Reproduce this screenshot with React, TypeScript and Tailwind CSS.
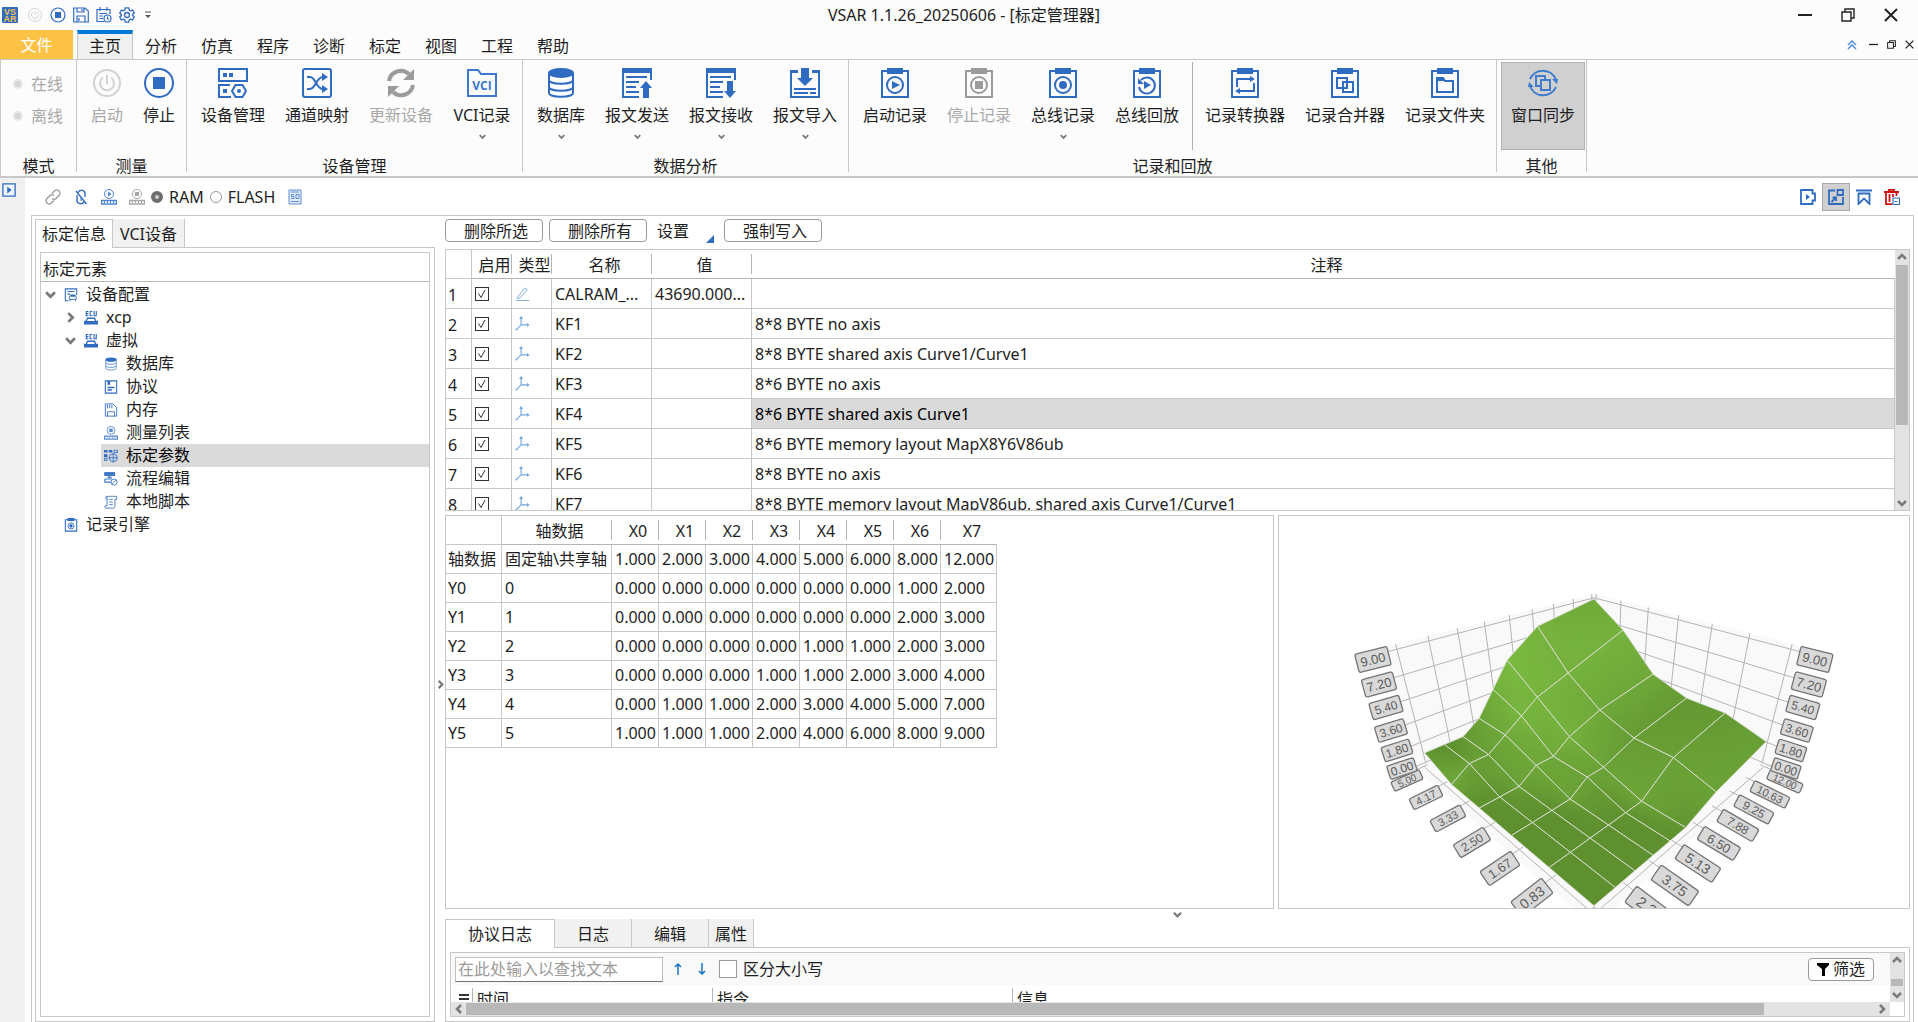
import React, { useState } from "react";
import clsx from "clsx";

const BLUE = "#2f6bc0";
const GRAY = "#9b9b9b";

/* ---------- ribbon icons (30 x 30) ---------- */

const Clipboard = ({
  color = BLUE,
  children,
}: {
  color?: string;
  children: React.ReactNode;
}) => (
  <g stroke={color} fill="none" strokeWidth="2">
    <path d="M2 3H28V29H2z" />
    <path d="M7 0H23V6H7z" fill={color} stroke="none" />
    {children}
  </g>
);

const ribbonIcons: Record<string, JSX.Element> = {
  power: (
    <g fill="none" stroke="#d2d2d2" strokeWidth="2">
      <circle cx="15" cy="15" r="13" />
      <path d="M11 9.5a7 7 0 1 0 8 0M15 7v9" />
    </g>
  ),
  stop: (
    <g>
      <circle cx="15" cy="15" r="14" fill="none" stroke={BLUE} strokeWidth="2" />
      <path d="M9 9H21V21H9z" fill={BLUE} />
    </g>
  ),
  device: (
    <g fill="none" stroke={BLUE} strokeWidth="2">
      <path d="M1 1H29V13H1zM12 17H1V29H13" />
      <path d="M17.500 17h7l3.500 6-3.500 6h-7L14 23z" />
      <path d="M5 5h4v4H5zM11 5h4v4h-4zM5 21h4v4H5z" fill={BLUE} stroke="none" />
      <circle cx="21" cy="23" r="2" fill={BLUE} stroke="none" />
    </g>
  ),
  shuffle: (
    <g fill="none" stroke={BLUE} strokeWidth="2">
      <rect x="1" y="1" width="28" height="28" rx="2" />
      <path d="M5 9h3c6 0 6 12 13 12h2M5 21h3c6 0 6-12 13-12h2" />
      <path d="M20 5l6 4-6 4zM20 17l6 4-6 4z" fill={BLUE} stroke="none" />
    </g>
  ),
  refresh: (
    <g fill="none" stroke={GRAY} strokeWidth="4">
      <path d="M3 13A12 12 0 0 1 23 6M27 17A12 12 0 0 1 7 24" />
      <path d="M28 1v11H17zM2 29V18h11z" fill={GRAY} stroke="none" />
    </g>
  ),
  vci: (
    <g>
      <path
        d="M1 28V2H11L14 6H29V28z"
        fill="none"
        stroke="#3c78cc"
        strokeWidth="2"
      />
      <text
        x="15"
        y="22"
        textAnchor="middle"
        fontSize="12"
        fontWeight="700"
        fontFamily="Open Sans, sans-serif"
        fill="#3c78cc"
      >
        VCI
      </text>
    </g>
  ),
  database: (
    <g>
      <ellipse cx="15" cy="5" rx="13" ry="5" fill={BLUE} />
      <path
        d="M3 5V25c0 5 24 5 24 0V5M3 12c0 5 24 5 24 0M3 19c0 5 24 5 24 0"
        fill="none"
        stroke={BLUE}
        strokeWidth="2"
      />
    </g>
  ),
  send: (
    <g fill="none" stroke={BLUE} strokeWidth="2">
      <path d="M29 12V2M1 1V29H17M4 9H25M4 14H17M4 19H14M4 24H17" />
      <path d="M0 0H30V5H0zM24 13l6 7h-3v10h-6V20h-3z" fill={BLUE} stroke="none" />
    </g>
  ),
  receive: (
    <g fill="none" stroke={BLUE} strokeWidth="2">
      <path d="M29 12V2M1 1V29H17M4 9H25M4 14H17M4 19H14M4 24H17" />
      <path d="M0 0H30V5H0zM21 13h6v10h3l-6 7-6-7h3z" fill={BLUE} stroke="none" />
    </g>
  ),
  import: (
    <g fill="none" stroke={BLUE} strokeWidth="2">
      <path d="M8 4H1V29H29V4H22M4 21H26M4 25H18M20 25H26" />
      <path d="M0 2h8v3H0zM22 2h8v3h-8zM11 0h8v10h4l-8 8-8-8h4z" fill={BLUE} stroke="none" />
    </g>
  ),
  recStart: (
    <Clipboard>
      <circle cx="15" cy="17" r="8" />
      <path d="M12 13l8 4-8 4z" fill={BLUE} stroke="none" />
    </Clipboard>
  ),
  recStop: (
    <Clipboard color={GRAY}>
      <circle cx="15" cy="17" r="8" />
      <path d="M11 13h8v8h-8z" fill={GRAY} stroke="none" />
    </Clipboard>
  ),
  recBus: (
    <Clipboard>
      <circle cx="15" cy="17" r="8" />
      <circle cx="15" cy="17" r="4" fill={BLUE} stroke="none" />
    </Clipboard>
  ),
  replay: (
    <Clipboard>
      <path d="M9 12A8 8 0 1 1 7 19" />
      <path d="M6 10v6h6zM12 13l7 4-7 4z" fill={BLUE} stroke="none" />
    </Clipboard>
  ),
  convert: (
    <Clipboard>
      <path d="M7 19V11H21M24 15V23H9" />
      <path d="M20 8l5 3-5 3zM10 20l-5 3 5 3z" fill={BLUE} stroke="none" />
    </Clipboard>
  ),
  merge: (
    <Clipboard>
      <path d="M7 10H17V20H7zM13 14H23V24H13z" />
    </Clipboard>
  ),
  recFolder: (
    <Clipboard>
      <path d="M7 24V10h6l2 3h8V24z" />
      <path d="M6 9h7l2 4H6z" fill={BLUE} stroke="none" />
    </Clipboard>
  ),
  sync: (
    <g fill="none" stroke="#3f7ccd" strokeWidth="2">
      <path d="M2 11A14 14 0 0 1 28 12M28 19A14 14 0 0 1 2 18" />
      <path d="M8 8H17V18H8z" />
      <path d="M13 12H22V22H13z" fill="#d0d0d0" />
      <path d="M24 11h6l-1 5zM6 19H0l1-5z" fill="#3f7ccd" stroke="none" />
    </g>
  ),
};

const RibbonIcon = ({ name }: { name: string }) => (
  <svg width="30" height="30" viewBox="0 0 30 30">
    {ribbonIcons[name]}
  </svg>
);

/* ---------- small icons (16 x 16) ---------- */

const Ruler = ({ color, square }: { color: string; square?: boolean }) => (
  <g fill="none" stroke={color}>
    <circle cx="8" cy="5" r="4.500" />
    <path
      d={square ? "M6 3h4v4H6z" : "M7 2.500L10.500 5 7 7.500z"}
      fill={color}
      stroke="none"
    />
    <path d="M.5 11.500H15.500V15H.5z" strokeWidth="1.500" />
    <path d="M3.500 12v2M6.500 12v2M9.500 12v2M12.500 12v2" />
  </g>
);

const smallIcons: Record<string, JSX.Element> = {
  config: (
    <g fill="none" stroke={BLUE}>
      <path d="M5 14.500H1.500V1H14.500V8M4 4H12M4 7H7" strokeWidth="1.200" />
      <path d="M6 13V10.500l1.500-2.500h5l1.500 2.500V13zM7 13v2M13 13v2" />
      <path d="M7 10h6v-2H8z" fill={BLUE} stroke="none" />
    </g>
  ),
  ecu: (
    <g fill={BLUE}>
      <path
        d="M5 .6H2.600V5.400H5M2.600 3H5M9.500 .6H7V5.400H9.500M11.500 0V5.400H14V0"
        fill="none"
        stroke={BLUE}
        strokeWidth="1.300"
      />
      <path d="M3.500 7.500h9l1.500 3.500H16v4.500H0V11h2z" />
      <path d="M4.500 9h7l1 2.500h-9z" fill="#fff" />
    </g>
  ),
  db: (
    <g>
      <ellipse cx="8" cy="3" rx="6.500" ry="2.500" fill={BLUE} />
      <path
        d="M2 3V13c0 2.500 12 2.500 12 0V3M2 6.500c0 2.500 12 2.500 12 0M2 10c0 2.500 12 2.500 12 0"
        fill="none"
        stroke="#5a8ad0"
      />
    </g>
  ),
  protocol: (
    <g fill="none" stroke={BLUE}>
      <path d="M1.500 1H14.500V15H1.500z" strokeWidth="1.200" />
      <path d="M4 1v5l1.500-1L7 6V1z" fill={BLUE} stroke="none" />
      <path d="M4 8.500h8M4 11.500h5" strokeWidth="1.600" />
    </g>
  ),
  memory: (
    <g fill="none" stroke={BLUE}>
      <path d="M1.500 1H10L14.500 5V15H1.500zM4 15V10H12V15M4 2V6M6.500 2V6M9 2V6" />
    </g>
  ),
  measure: <Ruler color="#5a8ad0" square />,
  params: (
    <g fill={BLUE}>
      <path d="M0 1h4v3H0zM5.500 1h4v3h-4zM0 6h4v3H0z" />
      <path d="M11.500 1.500h4v2.500h-4zM.5 10.500h3v2.500h-3z" fill="none" stroke={BLUE} />
      <circle cx="10.500" cy="10" r="4.500" fill="none" stroke={BLUE} />
      <path d="M10.500 4.500v11M5 10h11" stroke={BLUE} fill="none" />
    </g>
  ),
  flow: (
    <g fill="none" stroke="#3f76c6">
      <path d="M1 1H12V4H1zM6 4V7M1 8H9M9 6H4M1 8V11.500H8" strokeWidth="1.300" />
      <path d="M1 1H12V3H1z" fill={BLUE} />
      <circle cx="11.500" cy="11.500" r="3.500" />
      <path d="M9 14l5-5" />
    </g>
  ),
  script: (
    <g fill="none" stroke="#3f76c6">
      <path d="M3.500 1.500H14.500V5H12.500V13c0 2-2 2-2 2H2c-1.500 0-1.500-3 0-3H3.500zM3.500 1.500C1.500 1.500 1.500 5 3.500 5M6 5h4M6 8h4M6 11h4" />
    </g>
  ),
  engine: (
    <g fill="none" stroke={BLUE}>
      <path d="M1.500 2H14.500V15H1.500z" strokeWidth="1.200" />
      <path d="M4 0h8v3.500H4z" fill={BLUE} stroke="none" />
      <circle cx="8" cy="9" r="3.500" />
      <circle cx="8" cy="9" r="1.500" fill={BLUE} />
    </g>
  ),
  powerSmall: (
    <g fill="none" stroke="#d6d6d6">
      <circle cx="8" cy="8" r="6.500" />
      <path d="M6 5a3.500 3.500 0 1 0 4 0M8 4v4" />
    </g>
  ),
  stopSmall: (
    <g>
      <circle cx="8" cy="8" r="7" fill="none" stroke={BLUE} strokeWidth="1.200" />
      <path d="M5 5h6v6H5z" fill={BLUE} />
    </g>
  ),
  save: (
    <path
      d="M.7 1H12L15.300 4V15H.7zM4 15V9H12V15M4 1V5H11V1M6 11v3M9 2v2"
      fill="none"
      stroke={BLUE}
      strokeWidth="1.200"
    />
  ),
  schedule: (
    <g fill="none" stroke={BLUE} strokeWidth="1.200">
      <path d="M8 14.500H1V2.500H14V7M4 0V4M11 0V4M3.500 6.500H11M3.500 9H7M3.500 11.500H7" />
      <circle cx="11.500" cy="11.500" r="3.500" />
      <path d="M11.500 9.500v2.500h1.500" />
    </g>
  ),
  gear: (
    <g fill="none" stroke={BLUE} strokeWidth="1.300">
      <path d="M6.300.8h3.400l.5 2.200 1.300.8 2.100-.7 1.700 2.900-1.600 1.400v1.200l1.600 1.400-1.700 2.900-2.100-.7-1.300.8-.5 2.200H6.300l-.5-2.200-1.300-.8-2.100.7L.7 10l1.600-1.400V7.400L.7 6l1.700-2.900 2.100.7L5.800 3z" />
      <circle cx="8" cy="8" r="2.500" />
    </g>
  ),
  link: (
    <g fill="none" stroke={GRAY} strokeWidth="1.400">
      <path d="M7 4.500l2.500-2.500a3 3 0 0 1 4.500 4.500L11 9.500a3 3 0 0 1-4 0" />
      <path d="M9 11.500l-2.500 2.500A3 3 0 0 1 2 9.500L5 6.500a3 3 0 0 1 4 0" />
    </g>
  ),
  unlink: (
    <g fill="none" stroke={BLUE} strokeWidth="1.400">
      <path d="M5 3.500C7 0 12 1 12 4.500V8M11 13c-2 3-7 2-7-1.500V6M3 2l10.500 13" />
      <path d="M8 9v3" strokeWidth="1" />
    </g>
  ),
  rulerPlay: <Ruler color="#4f84d2" />,
  rulerStop: <Ruler color="#a6a6a6" square />,
  sq: (
    <g fill="none" stroke="#5c8cd2">
      <path d="M2 1H14V15H2z" fill="#e3ecf8" />
      <path d="M4 3h8" />
      <path d="M7 5.500H4.500v2H7v2H4M9 5.500h3v4H9zM4 12.500h8" />
    </g>
  ),
  edit: (
    <g fill="none" stroke="#7fabd9">
      <path d="M3 11.500L10.500 2l2.500 2L5.500 12.500l-3 1zM1 15.500h14" />
    </g>
  ),
  map: (
    <g fill="none" stroke="#74a9dd" strokeWidth="1.200">
      <path d="M6.500 1.500V9.500H14M6.500 9.500L1.500 14.500M5 3l1.500-2L8 3M13 8l1.500 1.500L13 11" />
      <circle cx="1.500" cy="14.500" r="1" fill="#74a9dd" stroke="none" />
    </g>
  ),
  play: (
    <g>
      <path d="M1 1H15V15H1z" fill="#eef4fb" stroke={BLUE} strokeWidth="1.500" />
      <path d="M6 4l5 4-5 4z" fill={BLUE} />
    </g>
  ),
  panelPlay: (
    <g fill="none" stroke={BLUE} strokeWidth="1.800">
      <path d="M1 1H12.500V4.500H15V11.500H12.500V15H1z" />
      <path d="M6 5l4 3-4 3z" fill={BLUE} stroke="none" />
    </g>
  ),
  popout: (
    <g fill="none" stroke={BLUE} strokeWidth="1.800">
      <path d="M7 1.500H1V15H15V8M9.500 1H15V6H9.500zM3.500 13L8 8.500M4.500 8.500H8V12" />
    </g>
  ),
  bookmark: (
    <path
      d="M0 1.500H16M2.500 4.500H13.500V15L8 9.500 2.500 15z"
      fill="none"
      stroke={BLUE}
      strokeWidth="1.800"
    />
  ),
  trash: (
    <g fill="none" stroke="#cf1111" strokeWidth="1.800">
      <path d="M0 3H15M5 2V.8h5V2M2 3V15.200H8M12.500 3V7M5.500 5V13M9 5V8" />
      <path d="M9 9H15.500V15.500H9zM10.500 12.500h3" stroke={BLUE} fill="#fff" strokeWidth="1.200" />
    </g>
  ),
};

const SmallIcon = ({ name, size = 16 }: { name: string; size?: number }) => (
  <svg width={size} height={size} viewBox="0 0 16 16" className="shrink-0">
    {smallIcons[name]}
  </svg>
);

const arrowPaths = {
  down: "M1 3l4 4 4-4",
  up: "M1 7l4-4 4 4",
  left: "M7 1L3 5l4 4",
  right: "M3 1l4 4-4 4",
};

const Chevron = ({
  dir = "down",
  size = 10,
}: {
  dir?: keyof typeof arrowPaths;
  size?: number;
}) => (
  <svg width={size} height={size} viewBox="0 0 10 10" className="shrink-0">
    <path d={arrowPaths[dir]} fill="none" stroke="#7a7a7a" strokeWidth="2.500" />
  </svg>
);

/* ---------- title bar and menu ---------- */

const WindowButtons = ({ small }: { small?: boolean }) => {
  const s = small ? 9 : 14;
  return (
    <div className={clsx("flex items-center", small ? "gap-[9px]" : "gap-[29px]")}>
      <button aria-label="最小化">
        <svg width={s} height={s} viewBox="0 0 14 14">
          <path d="M0 7H14" stroke="#222" strokeWidth="2" />
        </svg>
      </button>
      <button aria-label="还原">
        <svg width={s} height={s} viewBox="0 0 14 14">
          <path
            d="M1 4H10V13H1zM4 4V1H13V10H10"
            fill="none"
            stroke="#222"
            strokeWidth={small ? 1.6 : 1.4}
          />
        </svg>
      </button>
      <button aria-label="关闭">
        <svg width={s} height={s} viewBox="0 0 14 14">
          <path d="M1 1L13 13M13 1L1 13" stroke="#222" strokeWidth="2" />
        </svg>
      </button>
    </div>
  );
};

const TitleBar = () => (
  <header className="relative flex h-[30px] items-center justify-between pl-0.5 pr-5">
    <div className="flex items-center gap-[7px]">
      <svg width="16" height="16" viewBox="0 0 16 16" className="mr-0.5">
        <rect width="16" height="16" rx="1" fill={BLUE} />
        <g
          fill="#f3c052"
          fontSize="9"
          fontWeight="700"
          fontFamily="Liberation Sans, sans-serif"
          textAnchor="middle"
        >
          <text x="8" y="8">VS</text>
          <text x="8" y="15">AR</text>
        </g>
      </svg>
      <SmallIcon name="powerSmall" />
      <SmallIcon name="stopSmall" />
      <SmallIcon name="save" />
      <SmallIcon name="schedule" />
      <SmallIcon name="gear" />
      <svg width="8" height="8" viewBox="0 0 8 8" className="ml-0.5">
        <path d="M1 1H7" stroke="#555" />
        <path d="M1 4H7L4 7z" fill="#555" />
      </svg>
    </div>
    <h1 className="absolute inset-x-0 text-center pointer-events-none">
      <span className="ml-2.5">VSAR 1.1.26_20250606 - [标定管理器]</span>
    </h1>
    <WindowButtons />
  </header>
);

const menus = ["主页", "分析", "仿真", "程序", "诊断", "标定", "视图", "工程", "帮助"];

const MenuBar = () => {
  const [active, setActive] = useState("主页");
  return (
    <nav className="flex h-[30px] items-stretch border-b border-[#c8c8c8]">
      <button className="mr-1 w-[73px] bg-[#fbc245] text-white">文件</button>
      {menus.map((menu) => (
        <button
          key={menu}
          onClick={() => setActive(menu)}
          className={clsx(
            "w-14 border-t-4 pb-1.5",
            menu === active
              ? "border-t-[#0078d7] border-x border-x-[#c8c8c8] bg-[#f0f0f0]"
              : "border-t-transparent"
          )}
        >
          {menu}
        </button>
      ))}
      <div className="ml-auto flex items-center gap-3 pr-1">
        <svg width="10" height="10" viewBox="0 0 10 10">
          <path d="M1 5l4-4 4 4M1 9l4-4 4 4" fill="none" stroke="#5b8fd6" strokeWidth="1.600" />
        </svg>
        <WindowButtons small />
      </div>
    </nav>
  );
};

/* ---------- ribbon ---------- */

type RibbonItem = {
  icon: string;
  label: string;
  width: string;
  drop?: boolean;
  disabled?: boolean;
  active?: boolean;
  line?: boolean;
};

const groups: { title: string; items: RibbonItem[] }[] = [
  {
    title: "测量",
    items: [
      { icon: "power", label: "启动", width: "w-[52px]", disabled: true },
      { icon: "stop", label: "停止", width: "w-[52px]" },
    ],
  },
  {
    title: "设备管理",
    items: [
      { icon: "device", label: "设备管理", width: "w-[84px]" },
      { icon: "shuffle", label: "通道映射", width: "w-[84px]" },
      { icon: "refresh", label: "更新设备", width: "w-[84px]", disabled: true },
      { icon: "vci", label: "VCI记录", width: "w-[78px]", drop: true },
    ],
  },
  {
    title: "数据分析",
    items: [
      { icon: "database", label: "数据库", width: "w-[68px]", drop: true },
      { icon: "send", label: "报文发送", width: "w-[84px]", drop: true },
      { icon: "receive", label: "报文接收", width: "w-[84px]", drop: true },
      { icon: "import", label: "报文导入", width: "w-[84px]", drop: true },
    ],
  },
  {
    title: "记录和回放",
    items: [
      { icon: "recStart", label: "启动记录", width: "w-[84px]" },
      { icon: "recStop", label: "停止记录", width: "w-[84px]", disabled: true },
      { icon: "recBus", label: "总线记录", width: "w-[84px]", drop: true },
      { icon: "replay", label: "总线回放", width: "w-[84px]" },
      { icon: "convert", label: "记录转换器", width: "w-[100px]", line: true },
      { icon: "merge", label: "记录合并器", width: "w-[100px]" },
      { icon: "recFolder", label: "记录文件夹", width: "w-[100px]" },
    ],
  },
  {
    title: "其他",
    items: [{ icon: "sync", label: "窗口同步", width: "w-[84px]", active: true }],
  },
];

const RibbonButton = ({ item }: { item: RibbonItem }) => (
  <>
    {item.line && <div className="mr-0.5 ml-[3px] w-px bg-[#b0b0b0]" />}
    <button
      disabled={item.disabled}
      className={clsx(
        "flex h-[88px] flex-col items-center border pt-[5px] leading-6 whitespace-nowrap",
        item.width,
        item.active ? "border-[#b0b0b0] bg-[#d0d0d0]" : "border-transparent",
        item.disabled && "text-[#a9a9a9]"
      )}
    >
      <RibbonIcon name={item.icon} />
      <span className="mt-[5px]">{item.label}</span>
      {item.drop && (
        <span className="mt-1.5">
          <Chevron size={7} />
        </span>
      )}
    </button>
  </>
);

const Ribbon = () => (
  <div className="flex h-[118px] border-b-2 border-l border-[#c8c8c8]">
    <fieldset
      disabled
      className="mb-1 flex w-[76px] flex-col border-r border-[#c8c8c8] pt-1 text-[#a9a9a9]"
    >
      {["在线", "离线"].map((mode) => (
        <label key={mode} className="mt-2 flex h-6 items-center gap-2 pl-3 leading-6">
          <input
            type="radio"
            name="mode"
            className="size-2.5 appearance-none rounded-full border-2 border-[#e8e8e8] bg-[#d5d5d5]"
          />
          {mode}
        </label>
      ))}
      <div className="mt-auto text-center leading-3 text-[#1e1e1e]">模式</div>
    </fieldset>
    {groups.map((group) => (
      <section key={group.title} className="mb-1 flex flex-col border-r border-[#c8c8c8] pt-0.5">
        <div className="flex px-1 pr-px">
          {group.items.map((item) => (
            <RibbonButton key={item.label} item={item} />
          ))}
        </div>
        <div className="mt-auto text-center leading-3">{group.title}</div>
      </section>
    ))}
  </div>
);

/* ---------- calibration toolbar ---------- */

const radioStyle =
  "size-3 appearance-none rounded-full border border-[#9a9a9a] bg-white checked:border-4 checked:border-[#6e6e6e] checked:bg-[#d0d0d0]";

const Toolbar = () => {
  const [target, setTarget] = useState("RAM");
  return (
    <div className="flex h-[37px] items-center justify-between pr-3 pl-5">
      <div className="flex items-center">
        <button aria-label="连接"><SmallIcon name="link" /></button>
        <button aria-label="断开" className="ml-3"><SmallIcon name="unlink" /></button>
        <button aria-label="开始测量" className="ml-3"><SmallIcon name="rulerPlay" /></button>
        <button aria-label="停止测量" className="ml-3"><SmallIcon name="rulerStop" /></button>
        {["RAM", "FLASH"].map((name) => (
          <label key={name} className="ml-1.5 flex items-center gap-1.5">
            <input
              type="radio"
              name="target"
              checked={target === name}
              onChange={() => setTarget(name)}
              className={radioStyle}
            />
            {name}
          </label>
        ))}
        <button aria-label="脚本" className="ml-3"><SmallIcon name="sq" /></button>
      </div>
      <div className="flex items-center gap-1.5 pr-1.5">
        <button aria-label="面板"><SmallIcon name="panelPlay" /></button>
        <button
          aria-label="弹出"
          className="flex size-7 items-center justify-center border border-[#a8a8a8] bg-[#d0d0d0]"
        >
          <SmallIcon name="popout" />
        </button>
        <button aria-label="书签"><SmallIcon name="bookmark" /></button>
        <button aria-label="删除" className="ml-1.5"><SmallIcon name="trash" /></button>
      </div>
    </div>
  );
};

/* ---------- tabs ---------- */

const Tabs = ({
  tabs,
}: {
  tabs: { label: string; width: string }[];
}) => {
  const [active, setActive] = useState(0);
  return (
    <div role="tablist" className="flex h-[29px] shrink-0">
      {tabs.map((tab, i) => (
        <button
          key={tab.label}
          role="tab"
          aria-selected={i === active}
          onClick={() => setActive(i)}
          className={clsx(
            "whitespace-nowrap border-r border-[#c8c8c8]",
            tab.width,
            i === 0 && "border-l",
            i === active ? "border-t bg-white" : "border-b bg-[#f1f1f1] pt-px"
          )}
        >
          {tab.label}
        </button>
      ))}
      <div className="flex-1 border-b border-[#c8c8c8]" />
    </div>
  );
};

/* ---------- tree ---------- */

type Node = {
  label: string;
  icon: string;
  indent: string;
  state?: "open" | "closed";
};

const nodes: Node[] = [
  { label: "设备配置", icon: "config", indent: "ml-1", state: "open" },
  { label: "xcp", icon: "ecu", indent: "ml-6", state: "closed" },
  { label: "虚拟", icon: "ecu", indent: "ml-6", state: "open" },
  { label: "数据库", icon: "db", indent: "ml-[60px]" },
  { label: "协议", icon: "protocol", indent: "ml-[60px]" },
  { label: "内存", icon: "memory", indent: "ml-[60px]" },
  { label: "测量列表", icon: "measure", indent: "ml-[60px]" },
  { label: "标定参数", icon: "params", indent: "ml-[60px]" },
  { label: "流程编辑", icon: "flow", indent: "ml-[60px]" },
  { label: "本地脚本", icon: "script", indent: "ml-[60px]" },
  { label: "记录引擎", icon: "engine", indent: "ml-5" },
];

const TreePanel = () => {
  const [selected, setSelected] = useState("标定参数");
  return (
    <aside className="flex w-[400px] flex-col">
      <Tabs
        tabs={[
          { label: "标定信息", width: "w-[78px]" },
          { label: "VCI设备", width: "w-[72px]" },
        ]}
      />
      <div className="flex-1 border border-t-0 border-[#c8c8c8] p-1">
        <div className="h-full border border-[#c8c8c8]">
          <div className="h-[29px] border-b border-[#b8b8b8] pt-0.5 pl-0.5 leading-7">
            标定元素
          </div>
          <ul className="pt-px">
            {nodes.map((node) => (
              <li
                key={node.label}
                onClick={() => setSelected(node.label)}
                className={clsx(
                  "flex h-[23px] items-center leading-[23px]",
                  node.indent,
                  node.label === selected && "bg-[#dadada] text-black"
                )}
              >
                {node.state && (
                  <span className="mr-[7px] w-3">
                    <Chevron dir={node.state === "open" ? "down" : "right"} size={11} />
                  </span>
                )}
                <span className={clsx("mr-2", !node.state && "ml-[3px]")}>
                  <SmallIcon name={node.icon} size={14} />
                </span>
                {node.label}
              </li>
            ))}
          </ul>
        </div>
      </div>
    </aside>
  );
};

/* ---------- parameter list ---------- */

const params = [
  { name: "CALRAM_...", value: "43690.000...", note: "", icon: "edit" },
  { name: "KF1", value: "", note: "8*8 BYTE no axis", icon: "map" },
  { name: "KF2", value: "", note: "8*8 BYTE shared axis Curve1/Curve1", icon: "map" },
  { name: "KF3", value: "", note: "8*6 BYTE no axis", icon: "map" },
  { name: "KF4", value: "", note: "8*6 BYTE shared axis Curve1", icon: "map" },
  { name: "KF5", value: "", note: "8*6 BYTE memory layout MapX8Y6V86ub", icon: "map" },
  { name: "KF6", value: "", note: "8*8 BYTE no axis", icon: "map" },
  { name: "KF7", value: "", note: "8*8 BYTE memory layout MapV86ub, shared axis Curve1/Curve1", icon: "map" },
];

const cell = "border-r border-b border-[#c8c8c8] whitespace-nowrap overflow-hidden";

const HeadCell = ({
  children,
  last,
  width,
}: {
  children: React.ReactNode;
  last?: boolean;
  width?: string;
}) => (
  <th className={clsx("border-b border-[#b4b4b4] p-0 font-normal", width)}>
    <div
      className={clsx(
        "h-5 whitespace-nowrap pl-1.5 leading-[22px]",
        !last && "border-r border-[#b4b4b4]"
      )}
    >
      {children}
    </div>
  </th>
);

const ParamTable = () => {
  const [enabled, setEnabled] = useState(params.map(() => true));
  return (
    <div className="flex h-[262px] shrink-0 border border-[#c8c8c8]">
      <div className="min-w-0 flex-1 overflow-hidden">
        <table className="w-full table-fixed border-separate border-spacing-0">
          <thead>
            <tr className="h-[29px]">
              <th className={clsx(cell, "w-[26px]")} />
              <HeadCell width="w-10">启用</HeadCell>
              <HeadCell width="w-10">类型</HeadCell>
              <HeadCell width="w-[100px]">名称</HeadCell>
              <HeadCell width="w-[100px]">值</HeadCell>
              <HeadCell last>注释</HeadCell>
            </tr>
          </thead>
          <tbody>
            {params.map((param, i) => (
              <tr key={param.name} className="h-[30px]">
                <td className={clsx(cell, "pt-0.5 pl-0.5")}>{i + 1}</td>
                <td className={clsx(cell, "pl-[3px]")}>
                  <label className="relative block size-3.5">
                    <input
                      type="checkbox"
                      aria-label={param.name}
                      checked={enabled[i]}
                      onChange={() =>
                        setEnabled(enabled.map((on, k) => (k === i ? !on : on)))
                      }
                      className="block size-3.5 appearance-none border border-[#333]"
                    />
                    {enabled[i] && (
                      <svg viewBox="0 0 14 14" className="pointer-events-none absolute inset-0">
                        <path d="M3.500 6.500l2.500 4 4-7.500" fill="none" stroke="#333" />
                      </svg>
                    )}
                  </label>
                </td>
                <td className={clsx(cell, "pl-[3px]")}>
                  <SmallIcon name={param.icon} size={15} />
                </td>
                <td className={clsx(cell, "pl-[3px]")}>{param.name}</td>
                <td className={clsx(cell, "pl-[3px]")}>{param.value}</td>
                <td className={clsx(cell, "pl-[3px]", i === 4 && "bg-[#dadada] text-black")}>
                  {param.note}
                </td>
              </tr>
            ))}
          </tbody>
        </table>
      </div>
      <div className="flex w-3.5 flex-col items-center bg-[#e3e3e3] pt-0.5 pb-0.5">
        <Chevron dir="up" />
        <div className="mt-[3px] h-40 w-3 bg-[#b8b8b8]" />
        <div className="mt-auto flex">
          <Chevron />
        </div>
      </div>
    </div>
  );
};

/* ---------- map values ---------- */

const xAxis = [1, 2, 3, 4, 5, 6, 8, 12];
const yAxis = [0, 1, 2, 3, 4, 5];
const mapValues = [
  [0, 0, 0, 0, 0, 0, 1, 2],
  [0, 0, 0, 0, 0, 0, 2, 3],
  [0, 0, 0, 0, 1, 1, 2, 3],
  [0, 0, 0, 1, 1, 2, 3, 4],
  [0, 1, 1, 2, 3, 4, 5, 7],
  [1, 1, 1, 2, 4, 6, 8, 9],
];

const MapTable = () => (
  <div className="flex-[830] overflow-hidden border border-[#c8c8c8]">
    <table className="table-fixed border-separate border-spacing-0">
      <thead>
        <tr className="h-[29px]">
          <th className={clsx(cell, "w-14")} />
          <HeadCell width="w-[110px]">轴数据</HeadCell>
          {xAxis.map((_, i) => (
            <HeadCell key={i} last={i === 7} width={i === 7 ? "w-14" : "w-[47px]"}>
              X{i}
            </HeadCell>
          ))}
        </tr>
      </thead>
      <tbody>
        <tr className="h-[29px]">
          <td className={clsx(cell, "pl-0.5")}>轴数据</td>
          <td className={clsx(cell, "pl-[3px]")}>固定轴\共享轴</td>
          {xAxis.map((x) => (
            <td key={x} className={clsx(cell, "pl-[3px]")}>
              {x.toFixed(3)}
            </td>
          ))}
        </tr>
        {mapValues.map((row, i) => (
          <tr key={i} className="h-[29px]">
            <td className={clsx(cell, "pl-0.5")}>Y{i}</td>
            <td className={clsx(cell, "pl-[3px]")}>{yAxis[i]}</td>
            {row.map((v, k) => (
              <td key={k} className={clsx(cell, "pl-[3px]")}>
                {v.toFixed(3)}
              </td>
            ))}
          </tr>
        ))}
      </tbody>
    </table>
  </div>
);

/* ---------- 3D surface ---------- */

type Point = [number, number];

// u, v and w are the axes scaled to 0..1
const project = (u: number, v: number, w: number): Point => {
  const t = u + v;
  const depth = 1 + 0.47 * t - 0.215 * w;
  return [324 + (245 * (u - v)) / depth, (395.3 - 22.9 * t - 197 * w) / depth];
};

const us = xAxis.map((x) => (x - 1) / 11);
const vs = yAxis.map((y) => y / 5);
const points = (list: Point[]) =>
  list.map(([x, y]) => `${x.toFixed(1)},${y.toFixed(1)}`).join(" ");

const slope = (pos: number[], val: number[], i: number) => {
  const a = Math.max(0, i - 1);
  const b = Math.min(pos.length - 1, i + 1);
  return (val[b] - val[a]) / 18 / (pos[b] - pos[a]);
};

const light = mapValues.map((row, j) =>
  row.map((_, i) => {
    const du = slope(us, row, i);
    const dv = slope(vs, mapValues.map((r) => r[i]), j);
    return (du + dv + 1) / Math.sqrt(3 * (du * du + dv * dv + 1));
  })
);

const shade = (l: number) => {
  const k = Math.pow(Math.min(1, Math.max(0, (l - 0.58) / 0.38)), 1.5);
  const mix = (a: number, b: number) => Math.round(a + (b - a) * k);
  return `rgb(${mix(94, 122)},${mix(144, 184)},${mix(47, 64)})`;
};

const lerp = (a: number, b: number, k: number) => a + (b - a) * k;
const bilinear = (a: number, b: number, c: number, d: number, s: number, t: number) =>
  lerp(lerp(a, b, s), lerp(c, d, s), t);

const STEPS = 8;

const SurfaceCell = ({ i, j }: { i: number; j: number }) => {
  const corner = (di: number, dj: number) =>
    project(us[i + di], vs[j + dj], mapValues[j + dj][i + di] / 9);
  const [a, b, c, d] = [corner(0, 0), corner(1, 0), corner(0, 1), corner(1, 1)];
  const at = (s: number, t: number): Point => [
    bilinear(a[0], b[0], c[0], d[0], s, t),
    bilinear(a[1], b[1], c[1], d[1], s, t),
  ];
  const parts: JSX.Element[] = [];
  for (let m = 0; m < STEPS; m++) {
    for (let n = 0; n < STEPS; n++) {
      const s = m / STEPS;
      const t = n / STEPS;
      const e = 1 / STEPS;
      const color = shade(
        bilinear(
          light[j][i],
          light[j][i + 1],
          light[j + 1][i],
          light[j + 1][i + 1],
          s + e / 2,
          t + e / 2
        )
      );
      parts.push(
        <polygon
          key={`${m}-${n}`}
          points={points([at(s, t), at(s + e, t), at(s + e, t + e), at(s, t + e)])}
          fill={color}
          shapeRendering="crispEdges"
        />
      );
    }
  }
  return (
    <g>
      {parts}
      <polygon points={points([a, b, d, c])} fill="none" stroke="#d3dcc8" />
    </g>
  );
};

const cells = us
  .slice(1)
  .flatMap((_, i) => vs.slice(1).map((__, j) => ({ i, j })))
  .sort((p, q) => us[q.i] + vs[q.j] - us[p.i] - vs[p.j]);

const M = 0.015;
const B = 0.045;

const Line = ({ from, to }: { from: Point; to: Point }) => (
  <line x1={from[0]} y1={from[1]} x2={to[0]} y2={to[1]} stroke="#b4b4b4" />
);

const steps = (n: number) => Array.from({ length: n + 1 }, (_, i) => i / n);

// x, y, angle, box width, box height, font size
const labels: [string, number, number, number, number, number, number][] = [
  ["9.00", 103, 149, -14, 33, 19, 13],
  ["7.20", 109, 174, -15, 32, 18, 13],
  ["5.40", 116, 197, -16, 31, 17, 12],
  ["3.60", 121, 220, -17, 30, 16, 12],
  ["1.80", 127, 240, -18, 29, 15, 12],
  ["5.00", 137, 270, -24, 31, 10, 10],
  ["0.00", 132, 258, -18, 28, 14, 12],
  ["4.17", 156, 287, -26, 32, 12, 11],
  ["3.33", 178, 308, -28, 34, 13, 11],
  ["2.50", 202, 332, -31, 35, 15, 12],
  ["1.67", 230, 358, -34, 37, 17, 13],
  ["0.83", 262, 387, -38, 39, 19, 14],
  ["9.00", 545, 149, 14, 33, 19, 13],
  ["7.20", 539, 174, 15, 32, 18, 13],
  ["5.40", 533, 197, 16, 31, 17, 12],
  ["3.60", 527, 220, 17, 30, 16, 12],
  ["1.80", 521, 240, 18, 29, 15, 12],
  ["12.00", 515, 271, 24, 36, 10, 10],
  ["0.00", 516, 258, 18, 28, 14, 12],
  ["10.63", 500, 284, 26, 39, 12, 11],
  ["9.25", 484, 299, 28, 39, 13, 12],
  ["7.88", 468, 315, 30, 41, 14, 12],
  ["6.50", 449, 333, 31, 42, 15, 13],
  ["5.13", 428, 353, 33, 44, 17, 14],
  ["3.75", 405, 375, 35, 46, 18, 14],
  ["2.38", 380, 398, 37, 48, 20, 15],
];

const SurfaceChart = () => (
  <div className="flex-[632] overflow-hidden border border-[#c8c8c8]">
    <svg viewBox="9 6 630 391" className="h-full w-full">
      <g fill="#f9f9f9">
        <polygon
          points={points([
            project(-B, 1 + M, -0.02),
            project(1 + M, 1 + M, -0.02),
            project(1 + M, 1 + M, 1.04),
            project(-B, 1 + M, 1.04),
          ])}
        />
        <polygon
          points={points([
            project(1 + M, -B, -0.02),
            project(1 + M, 1 + M, -0.02),
            project(1 + M, 1 + M, 1.04),
            project(1 + M, -B, 1.04),
          ])}
        />
        <polygon
          points={points([
            project(-B, -B, -0.02),
            project(1 + B, -B, -0.02),
            project(1 + B, 1 + B, -0.02),
            project(-B, 1 + B, -0.02),
          ])}
        />
      </g>
      {steps(5).map((w) => (
        <g key={w}>
          <Line from={project(-B, 1 + M, w)} to={project(1 + M, 1 + M, w)} />
          <Line from={project(1 + M, -B, w)} to={project(1 + M, 1 + M, w)} />
        </g>
      ))}
      {steps(8).map((u) => (
        <g key={u}>
          <Line from={project(u, 1 + M, -0.01)} to={project(u, 1 + M, 1.04)} />
          <Line from={project(u, -0.08, -0.01)} to={project(u, 0, -0.01)} />
        </g>
      ))}
      {steps(6).map((v) => (
        <g key={v}>
          <Line from={project(1 + M, v, -0.01)} to={project(1 + M, v, 1.04)} />
          <Line from={project(-0.08, v, -0.01)} to={project(0, v, -0.01)} />
        </g>
      ))}
      <Line from={project(-M, 1, -0.02)} to={project(-M, -B, -0.02)} />
      <Line from={project(1, -M, -0.02)} to={project(-B, -M, -0.02)} />
      {cells.map(({ i, j }) => (
        <SurfaceCell key={`${i}-${j}`} i={i} j={j} />
      ))}
      {labels.map(([text, x, y, angle, w, h, size]) => (
        <g key={`${text}-${x}`} transform={`translate(${x} ${y}) rotate(${angle})`}>
          <rect
            x={-w / 2}
            y={-h / 2}
            width={w}
            height={h}
            rx="2"
            fill="#d9d9d9"
            stroke="#747474"
            strokeWidth="1.300"
          />
          <text
            textAnchor="middle"
            y={size * 0.36}
            fontSize={size}
            fontFamily="Liberation Sans, sans-serif"
            fill="#5c5c5c"
          >
            {text}
          </text>
        </g>
      ))}
    </svg>
  </div>
);

/* ---------- log ---------- */

const LogPanel = () => {
  const [text, setText] = useState("");
  return (
    <section className="flex h-[103px] shrink-0 flex-col">
      <Tabs
        tabs={[
          { label: "协议日志", width: "w-[110px]" },
          { label: "日志", width: "w-[77px]" },
          { label: "编辑", width: "w-[77px]" },
          { label: "属性", width: "w-[45px]" },
        ]}
      />
      <div className="min-h-0 flex-1 border border-t-0 border-[#c8c8c8] p-1">
        <div className="flex h-full flex-col border border-[#c8c8c8]">
          <div className="flex min-h-0 flex-1">
            <div className="min-w-0 flex-1 overflow-hidden">
              <div className="flex h-8 items-center bg-[#f9f9f9] pr-4 pl-1">
                <input
                  type="text"
                  aria-label="查找"
                  value={text}
                  onChange={(e) => setText(e.target.value)}
                  placeholder="在此处输入以查找文本"
                  className="h-[25px] w-52 border border-[#c0c0c0] border-b-[#707070] bg-white px-0.5 placeholder:text-[#9a9a9a]"
                />
                {["M5 12V1M2 4l3-3 3 3", "M5 0V11M2 8l3 3 3-3"].map((d, i) => (
                  <button
                    key={d}
                    aria-label={i === 0 ? "上一个" : "下一个"}
                    className={i === 0 ? "ml-2.5" : "ml-3.5"}
                  >
                    <svg width="10" height="12" viewBox="0 0 10 12">
                      <path d={d} fill="none" stroke="#1c74bd" strokeWidth="1.500" />
                    </svg>
                  </button>
                ))}
                <label className="ml-3 flex items-center gap-1.5">
                  <input
                    type="checkbox"
                    className="size-[18px] appearance-none border border-[#9a9a9a] bg-white checked:bg-[#b8b8b8]"
                  />
                  区分大小写
                </label>
                <button className="ml-auto flex h-[23px] w-[66px] items-center justify-center gap-1 rounded border border-[#9a9a9a] bg-white leading-none">
                  <svg width="12" height="13" viewBox="0 0 12 13">
                    <path d="M0 0H12V2L8 6V13H5V6L0 2z" fill="#000" />
                  </svg>
                  筛选
                </button>
              </div>
              <table className="w-full table-fixed border-separate border-spacing-0">
                <thead>
                  <tr className="text-left">
                    <th className="w-[21px] p-0 pt-0.5 align-top">
                      <svg width="20" height="20" viewBox="0 0 20 20">
                        <path d="M8 8H18M8 12H18M8 16H18" stroke="#333" strokeWidth="2" />
                      </svg>
                    </th>
                    {[
                      ["时间", "w-60"],
                      ["指令", "w-[300px]"],
                      ["信息", ""],
                    ].map(([label, width]) => (
                      <th key={label} className={clsx("p-0 pt-[3px] align-top font-normal", width)}>
                        <div className="border-l border-[#b4b4b4] pl-1 leading-[22px]">{label}</div>
                      </th>
                    ))}
                  </tr>
                </thead>
              </table>
            </div>
            <div className="flex w-3.5 flex-col items-center bg-[#e3e3e3] py-0.5">
              <Chevron dir="up" />
              <div className="mt-auto h-[7px] w-3 bg-[#b8b8b8]" />
              <div className="mt-1 flex">
                <Chevron />
              </div>
            </div>
          </div>
          <div className="flex h-3.5 shrink-0">
            <div className="flex flex-1 items-center bg-[#e3e3e3] px-[3px]">
              <Chevron dir="left" />
              <div className="ml-0.5 flex h-full flex-1">
                <div className="my-px w-[92%] bg-[#b8b8b8]" />
              </div>
              <Chevron dir="right" />
            </div>
            <div className="w-3.5" />
          </div>
        </div>
      </div>
    </section>
  );
};

/* ---------- editor area ---------- */

const editButton =
  "h-[23px] w-[98px] rounded border border-[#9a9a9a] bg-white pl-1 leading-none";

const Editor = () => (
  <main className="flex min-w-0 flex-1 flex-col">
    <div className="mb-[7px] flex h-[23px] shrink-0 items-center gap-1.5">
      <button className={editButton}>删除所选</button>
      <button className={editButton}>删除所有</button>
      <button className="flex w-[65px] items-end justify-between px-1 leading-6">
        设置
        <svg width="8" height="8" viewBox="0 0 8 8">
          <path d="M8 0V8H0z" fill={BLUE} />
        </svg>
      </button>
      <button className={editButton}>强制写入</button>
    </div>
    <ParamTable />
    <div className="mt-1 flex min-h-0 flex-1 gap-1">
      <MapTable />
      <SurfaceChart />
    </div>
    <div className="flex h-2.5 shrink-0 items-center justify-center">
      <Chevron size={9} />
    </div>
    <LogPanel />
  </main>
);

export default function App() {
  return (
    <div className="flex h-screen w-full flex-col overflow-hidden bg-[#fcfcfc] font-['Noto_Sans','Noto_Sans_CJK_SC',sans-serif] text-base leading-6 text-[#1e1e1e]">
      <TitleBar />
      <MenuBar />
      <Ribbon />
      <div className="flex min-h-0 flex-1">
        <div className="w-[25px] shrink-0 bg-[#f0f0f0] pt-[5px] pl-0.5">
          <button aria-label="展开" className="block">
            <SmallIcon name="play" size={14} />
          </button>
        </div>
        <div className="flex min-w-0 flex-1 flex-col bg-white">
          <Toolbar />
          <div className="mr-1 ml-1.5 flex min-h-0 flex-1 border border-b-0 border-[#c8c8c8] px-[3px] pt-[3px]">
            <TreePanel />
            <div className="flex w-2.5 shrink-0 items-center justify-center pt-32">
              <Chevron dir="right" size={9} />
            </div>
            <Editor />
          </div>
        </div>
      </div>
    </div>
  );
}
